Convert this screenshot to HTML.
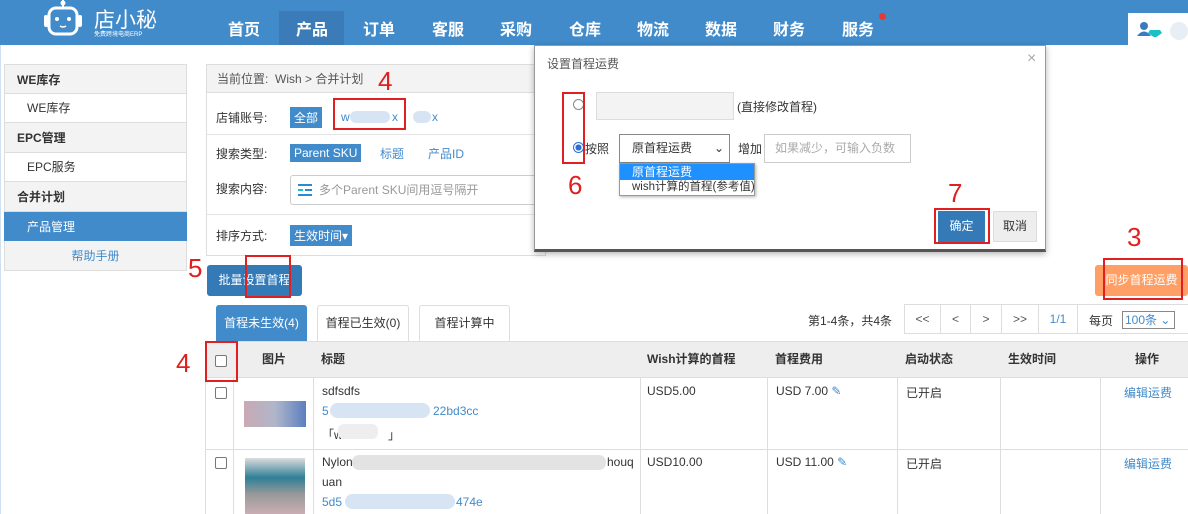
<!DOCTYPE html>
<html><head><meta charset="utf-8"><style>
*{box-sizing:border-box;margin:0;padding:0}
body{width:1188px;height:514px;overflow:hidden;background:#fff;font-family:"Liberation Sans","Noto Sans CJK SC",sans-serif;font-size:12px;color:#333;position:relative}
.a{position:absolute}
.nav{color:#fff;font-size:16px;font-weight:bold;top:16px}
.red{border:2px solid #e02020}
.rn{color:#e02020;font-size:26px;font-family:"Liberation Sans",sans-serif}
.sb{left:4px;width:183px;height:30px;line-height:30px;border-bottom:1px solid #ddd;border-left:1px solid #ddd;border-right:1px solid #ddd}
.tag{background:#428bca;color:#fff;padding:2px 4px}
.lk{color:#428bca}
.blob{background:#d7e4f3;border-radius:8px}
.th{top:341px;height:37px;line-height:37px;font-weight:bold}
.vl{width:1px;background:#ddd}
.pb{top:304px;height:30px;line-height:28px;text-align:center;border:1px solid #ddd;border-left:none;color:#555}
</style></head><body>
<!-- header -->
<div class="a" style="left:0;top:0;width:1188px;height:45px;background:#418bcb"></div>
<div class="a" style="left:279px;top:11px;width:65px;height:34px;background:#3a7bb8"></div>
<svg class="a" style="left:43px;top:0" width="42" height="40" viewBox="0 0 42 40"><line x1="20" y1="0" x2="20" y2="7" stroke="#fff" stroke-width="2"/><circle cx="20" cy="3" r="2.5" fill="#fff"/><rect x="6" y="8" width="28" height="26" rx="7" fill="none" stroke="#fff" stroke-width="3"/><rect x="1" y="15" width="4" height="12" rx="2" fill="#fff"/><rect x="35" y="15" width="4" height="12" rx="2" fill="#fff"/><circle cx="14" cy="19" r="2" fill="#fff"/><circle cx="26" cy="19" r="2" fill="#fff"/><path d="M17 26 q3 2 6 0" stroke="#fff" stroke-width="1.5" fill="none"/></svg>
<div class="a" style="left:94px;top:4px;color:#fff;font-size:21px">店小秘</div>
<div class="a" style="left:94px;top:29px;color:#fff;font-size:6px">免费跨境电商ERP</div>
<div class="a nav" style="left:228px">首页</div>
<div class="a nav" style="left:296px">产品</div>
<div class="a nav" style="left:363px">订单</div>
<div class="a nav" style="left:432px">客服</div>
<div class="a nav" style="left:500px">采购</div>
<div class="a nav" style="left:569px">仓库</div>
<div class="a nav" style="left:637px">物流</div>
<div class="a nav" style="left:705px">数据</div>
<div class="a nav" style="left:773px">财务</div>
<div class="a nav" style="left:842px">服务</div>
<div class="a" style="left:879px;top:13px;width:7px;height:7px;border-radius:50%;background:#e53935"></div>
<div class="a" style="left:1128px;top:13px;width:60px;height:32px;background:#fff"></div>
<svg class="a" style="left:1137px;top:21px" width="28" height="16"><circle cx="7" cy="5" r="4" fill="#3a7bc0"/><path d="M0 15 q7 -9 14 0z" fill="#3a7bc0"/><path d="M13 9 h10 l2 3 l-7 5 l-7 -5z" fill="#19c0c8"/></svg>
<div class="a" style="left:1170px;top:22px;width:18px;height:18px;border-radius:9px;background:#e8eef5"></div>
<div class="a" style="left:0;top:45px;width:1px;height:469px;background:#cfe0f1"></div>
<!-- sidebar -->
<div class="a sb" style="top:64px;background:#f3f3f3;font-weight:bold;padding-left:12px;border-top:1px solid #ddd">WE库存</div>
<div class="a sb" style="top:93px;padding-left:22px">WE库存</div>
<div class="a sb" style="top:123px;background:#f3f3f3;font-weight:bold;padding-left:12px">EPC管理</div>
<div class="a sb" style="top:152px;padding-left:22px">EPC服务</div>
<div class="a sb" style="top:182px;background:#f3f3f3;font-weight:bold;padding-left:12px">合并计划</div>
<div class="a sb" style="top:212px;padding-left:22px;background:#428bca;color:#fff;border-color:#428bca">产品管理</div>
<div class="a sb" style="top:241px;background:#f3f3f3;text-align:center;color:#428bca">帮助手册</div>
<!-- main panel -->
<div class="a" style="left:206px;top:64px;width:340px;height:192px;border:1px solid #ddd"></div>
<div class="a" style="left:207px;top:65px;width:330px;height:28px;background:#f3f3f3;border-bottom:1px solid #ddd;line-height:28px;padding-left:10px;color:#555">当前位置:&nbsp; Wish &gt; 合并计划</div>
<div class="a" style="left:216px;top:109px">店铺账号:</div>
<div class="a tag" style="left:290px;top:107px">全部</div>
<div class="a lk" style="left:341px;top:110px">w</div><div class="a blob" style="left:350px;top:111px;width:40px;height:12px"></div><div class="a lk" style="left:392px;top:110px">x</div>
<div class="a blob" style="left:413px;top:111px;width:18px;height:12px"></div><div class="a lk" style="left:432px;top:110px">x</div>
<div class="a" style="left:207px;top:134px;width:330px;height:1px;background:#e5e5e5"></div>
<div class="a" style="left:216px;top:145px">搜索类型:</div>
<div class="a tag" style="left:290px;top:144px">Parent SKU</div>
<div class="a lk" style="left:380px;top:145px">标题</div>
<div class="a lk" style="left:428px;top:145px">产品ID</div>
<div class="a" style="left:216px;top:180px">搜索内容:</div>
<div class="a" style="left:290px;top:175px;width:250px;height:30px;border:1px solid #ccc;border-radius:3px;color:#999;line-height:28px;padding-left:28px">多个Parent SKU间用逗号隔开</div>
<svg class="a" style="left:298px;top:184px" width="14" height="12"><rect y="0" width="14" height="2" fill="#2a8ad4"/><rect y="5" width="5" height="2" fill="#19c0c8"/><rect x="7" y="5" width="7" height="2" fill="#2a8ad4"/><rect y="10" width="14" height="2" fill="#2a8ad4"/></svg>
<div class="a" style="left:207px;top:214px;width:330px;height:1px;background:#e5e5e5"></div>
<div class="a" style="left:216px;top:227px">排序方式:</div>
<div class="a tag" style="left:290px;top:225px">生效时间▾</div>
<!-- buttons -->
<div class="a" style="left:207px;top:265px;width:95px;height:31px;background:#337ab7;border-radius:3px;color:#fff;line-height:31px;text-align:center">批量设置首程</div>
<div class="a" style="left:1095px;top:265px;width:93px;height:31px;background:#ff9f65;border-radius:3px;color:#fff;line-height:31px;text-align:center">同步首程运费</div>
<!-- tabs -->
<div class="a" style="left:216px;top:305px;width:91px;height:36px;background:#428bca;color:#fff;line-height:36px;text-align:center;border-radius:3px 3px 0 0">首程未生效(4)</div>
<div class="a" style="left:317px;top:305px;width:92px;height:36px;border:1px solid #ddd;border-bottom:none;line-height:34px;text-align:center;border-radius:3px 3px 0 0">首程已生效(0)</div>
<div class="a" style="left:419px;top:305px;width:91px;height:36px;border:1px solid #ddd;border-bottom:none;line-height:34px;text-align:center;border-radius:3px 3px 0 0">首程计算中</div>
<div class="a" style="left:808px;top:312px">第1-4条，共4条</div>
<div class="a pb" style="left:904px;width:37px;border-left:1px solid #ddd">&lt;&lt;</div>
<div class="a pb" style="left:941px;width:30px">&lt;</div>
<div class="a pb" style="left:971px;width:31px">&gt;</div>
<div class="a pb" style="left:1002px;width:37px">&gt;&gt;</div>
<div class="a pb" style="left:1039px;width:39px;color:#428bca">1/1</div>
<div class="a pb" style="left:1078px;width:110px;border-right:none"></div>
<div class="a" style="left:1089px;top:312px">每页</div>
<div class="a" style="left:1122px;top:311px;width:53px;height:18px;border:1px solid #888;color:#428bca;line-height:16px;padding-left:2px">100条 ⌄</div>
<!-- table -->
<div class="a" style="left:205px;top:341px;width:983px;height:37px;background:#eee;border-top:1px solid #ddd;border-bottom:1px solid #ddd"></div>
<div class="a" style="left:205px;top:341px;width:1px;height:173px;background:#ddd"></div>
<div class="a" style="left:205px;top:449px;width:983px;height:1px;background:#ddd"></div>
<div class="a vl" style="left:233px;top:378px;height:136px"></div>
<div class="a vl" style="left:313px;top:378px;height:136px"></div>
<div class="a vl" style="left:640px;top:378px;height:136px"></div>
<div class="a vl" style="left:767px;top:378px;height:136px"></div>
<div class="a vl" style="left:897px;top:378px;height:136px"></div>
<div class="a vl" style="left:1000px;top:378px;height:136px"></div>
<div class="a vl" style="left:1100px;top:378px;height:136px"></div>
<div class="a" style="left:215px;top:355px;width:12px;height:12px;border:1px solid #777;border-radius:2px;background:#fff"></div>
<div class="a th" style="left:262px">图片</div>
<div class="a th" style="left:321px">标题</div>
<div class="a th" style="left:647px">Wish计算的首程</div>
<div class="a th" style="left:775px">首程费用</div>
<div class="a th" style="left:905px">启动状态</div>
<div class="a th" style="left:1008px">生效时间</div>
<div class="a th" style="left:1135px">操作</div>
<!-- row1 -->
<div class="a" style="left:215px;top:387px;width:12px;height:12px;border:1px solid #777;border-radius:2px"></div>
<div class="a" style="left:244px;top:401px;width:62px;height:26px;background:linear-gradient(90deg,#c9a9b4,#b0b6c9,#5b7fc0)"></div>
<div class="a" style="left:322px;top:384px">sdfsdfs</div>
<div class="a lk" style="left:322px;top:404px">5</div><div class="a blob" style="left:330px;top:403px;width:100px;height:15px"></div><div class="a lk" style="left:433px;top:404px">22bd3cc</div>
<div class="a" style="left:322px;top:426px">「w</div><div class="a" style="left:338px;top:424px;width:40px;height:15px;background:#eee;border-radius:6px"></div><div class="a" style="left:388px;top:426px">」</div>
<div class="a" style="left:647px;top:384px">USD5.00</div>
<div class="a" style="left:776px;top:384px">USD 7.00 <span class="lk">&#9998;</span></div>
<div class="a" style="left:906px;top:384px">已开启</div>
<div class="a lk" style="left:1124px;top:384px">编辑运费</div>
<!-- row2 -->
<div class="a" style="left:215px;top:457px;width:12px;height:12px;border:1px solid #777;border-radius:2px"></div>
<div class="a" style="left:245px;top:458px;width:60px;height:56px;background:linear-gradient(180deg,#ddd 0,#2f7f96 35%,#999 65%,#c9aeb4 100%)"></div>
<div class="a" style="left:322px;top:455px">Nylon</div><div class="a" style="left:352px;top:455px;width:254px;height:15px;background:#e3e3e3;border-radius:7px"></div><div class="a" style="left:607px;top:455px">houq</div>
<div class="a" style="left:322px;top:475px">uan</div>
<div class="a lk" style="left:322px;top:495px">5d5</div><div class="a blob" style="left:345px;top:494px;width:110px;height:15px"></div><div class="a lk" style="left:456px;top:495px">474e</div>
<div class="a" style="left:647px;top:455px">USD10.00</div>
<div class="a" style="left:776px;top:455px">USD 11.00 <span class="lk">&#9998;</span></div>
<div class="a" style="left:906px;top:455px">已开启</div>
<div class="a lk" style="left:1124px;top:455px">编辑运费</div>
<!-- modal -->
<div class="a" style="left:534px;top:45px;width:512px;height:207px;background:#fff;border:1px solid #999;border-bottom:3px solid #555;box-shadow:0 2px 6px rgba(0,0,0,.3)"></div>
<div class="a" style="left:547px;top:55px;color:#555">设置首程运费</div>
<div class="a" style="left:1027px;top:50px;color:#aaa;font-size:16px">×</div>
<div class="a" style="left:573px;top:99px;width:11px;height:11px;border:1px solid #888;border-radius:50%"></div>
<div class="a" style="left:596px;top:92px;width:138px;height:28px;background:#f3f3f3;border:1px solid #ddd"></div>
<div class="a" style="left:737px;top:98px">(直接修改首程)</div>
<div class="a" style="left:573px;top:142px;width:11px;height:11px;border:1px solid #2a6fd8;border-radius:50%;background:radial-gradient(#2a6fd8 45%,#fff 50%)"></div>
<div class="a" style="left:585px;top:140px">按照</div>
<div class="a" style="left:619px;top:134px;width:111px;height:29px;border:1px solid #888;line-height:27px;padding-left:12px">原首程运费<span style="position:absolute;right:5px">⌄</span></div>
<div class="a" style="left:738px;top:140px">增加</div>
<div class="a" style="left:764px;top:134px;width:147px;height:29px;border:1px solid #ccc;color:#aaa;line-height:27px;padding-left:10px">如果减少，可输入负数</div>
<div class="a" style="left:619px;top:163px;width:136px;height:33px;border:1px solid #999;box-shadow:1px 1px 3px rgba(0,0,0,.3);background:#fff"></div>
<div class="a" style="left:620px;top:164px;width:134px;height:16px;background:#1e90ff;color:#fff;padding-left:12px;line-height:16px">原首程运费</div>
<div class="a" style="left:620px;top:180px;padding-left:12px;line-height:15px;font-size:11.5px;white-space:nowrap">wish计算的首程(参考值)</div>
<div class="a" style="left:938px;top:211px;width:47px;height:31px;background:#337ab7;color:#fff;line-height:31px;text-align:center">确定</div>
<div class="a" style="left:993px;top:211px;width:44px;height:31px;background:#eee;border:1px solid #ddd;line-height:29px;text-align:center">取消</div>
<!-- annotations -->
<div class="a red" style="left:333px;top:98px;width:73px;height:32px"></div>
<div class="a rn" style="left:378px;top:66px">4</div>
<div class="a red" style="left:562px;top:92px;width:23px;height:72px"></div>
<div class="a rn" style="left:568px;top:170px">6</div>
<div class="a red" style="left:934px;top:208px;width:56px;height:36px"></div>
<div class="a rn" style="left:948px;top:178px">7</div>
<div class="a red" style="left:245px;top:255px;width:46px;height:43px"></div>
<div class="a rn" style="left:188px;top:253px">5</div>
<div class="a red" style="left:1103px;top:258px;width:80px;height:42px"></div>
<div class="a rn" style="left:1127px;top:222px">3</div>
<div class="a red" style="left:205px;top:341px;width:33px;height:41px"></div>
<div class="a rn" style="left:176px;top:348px">4</div>
</body></html>
